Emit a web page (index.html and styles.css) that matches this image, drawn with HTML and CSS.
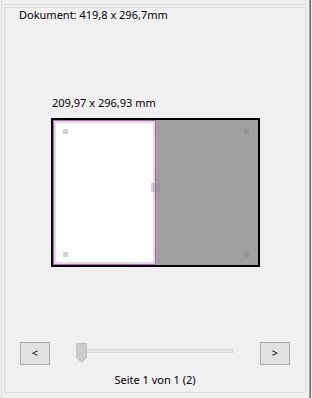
FILE: index.html
```html
<!DOCTYPE html>
<html>
<head>
<meta charset="utf-8">
<link rel="stylesheet" href="styles.css">
</head>
<body>
<div class="window">
  <div class="rail"></div>
  <div class="col">
    <div class="topbox"></div>
    <div class="group">
      <div class="doc-label">Dokument: 419,8 x 296,7mm</div>
      <div class="size-label">209,97 x 296,93 mm</div>
      <div class="preview">
        <div class="page"></div>
        <div class="rest"></div>
        <span class="handle h-tl"></span>
        <span class="handle h-tr"></span>
        <span class="handle h-bl"></span>
        <span class="handle h-br"></span>
        <span class="handle h-mid"></span>
      </div>
      <div class="controls">
        <div class="btn">&lt;</div>
        <div class="slider">
          <div class="track"></div>
          <svg class="thumb" width="12" height="20" viewBox="0 0 12 20">
            <polygon points="0.5,0.5 10.5,0.5 10.5,14.5 5.5,19.5 0.5,14.5" fill="#cdcdcd" stroke="#c3c3c3"/>
            <polyline points="0.5,14.5 5.5,19.5 10.5,14.5" fill="none" stroke="#b9c8d8"/>
          </svg>
        </div>
        <div class="btn btn-right">&gt;</div>
      </div>
      <div class="page-label">Seite 1 von 1 (2)</div>
    </div>
  </div>
  <div class="edge"></div>
</div>
</body>
</html>
```

FILE: styles.css
```css
html, body {
  margin: 0;
  padding: 0;
  background: #f0f0f0;
}
body {
  font-family: "Noto Sans", "Open Sans", sans-serif;
  font-size: 11px;
  color: #000;
}
.window {
  width: 312px;
  height: 398px;
  display: flex;
  overflow: hidden;
}
.rail {
  width: 1px;
  margin-left: 1px;
  background: #dcdcdc;
}
.col {
  width: 304px;
  display: flex;
  flex-direction: column;
}
.topbox {
  height: 4px;
  border-right: 1px solid #dcdcdc;
  border-bottom: 1px solid #dcdcdc;
}
.group {
  margin-top: 2px;
  margin-left: 2px;
  width: 302px;
  height: 386px;
  box-sizing: border-box;
  border: 1px solid #dcdcdc;
  display: flex;
  flex-direction: column;
}
.doc-label {
  line-height: 14px;
  padding-left: 14px;
}
.size-label {
  line-height: 14px;
  margin-top: 74px;
  margin-left: 47px;
}
.preview {
  position: relative;
  margin-top: 8px;
  margin-left: 46px;
  width: 205px;
  height: 145px;
  border: 2px solid #000;
  display: flex;
}
.page {
  width: 103px;
  box-sizing: border-box;
  border: 1px solid #c05fc8;
  box-shadow: inset 0 0 0 2px #dcdcdc;
  background: #fff;
}
.rest {
  flex: 1;
  background: #a0a0a0;
}
.handle {
  position: absolute;
  width: 5px;
  height: 5px;
  background: rgba(128, 128, 128, 0.35);
}
.h-tl { left: 10px; top: 9px; }
.h-tr { left: 191px; top: 9px; }
.h-bl { left: 10px; top: 132px; }
.h-br { left: 191px; top: 132px; }
.h-mid { left: 98px; top: 63px; width: 9px; height: 9px; }
.controls {
  margin-top: 75px;
  height: 23px;
  padding: 0 15px;
  display: flex;
}
.btn {
  width: 30px;
  height: 23px;
  box-sizing: border-box;
  border: 1px solid #adadad;
  background: #e1e1e1;
  font-size: 11px;
  line-height: 20px;
  text-align: center;
}
.btn-right {
  margin-left: auto;
}
.slider {
  position: relative;
  margin-left: 26px;
  width: 157px;
  height: 23px;
}
.track {
  margin-top: 7px;
  margin-left: 4px;
  width: 153px;
  height: 4px;
  box-sizing: border-box;
  border: 1px solid #d6d6d6;
  background: #e7e7e7;
}
.thumb {
  position: absolute;
  left: 0;
  top: 1px;
  display: block;
}
.page-label {
  margin-top: 8px;
  line-height: 14px;
  text-align: center;
}
.edge {
  margin-left: 3px;
  width: 2px;
  box-sizing: border-box;
  border-left: 1px solid #a0a0a0;
  background: #6d6d6d;
}
```
